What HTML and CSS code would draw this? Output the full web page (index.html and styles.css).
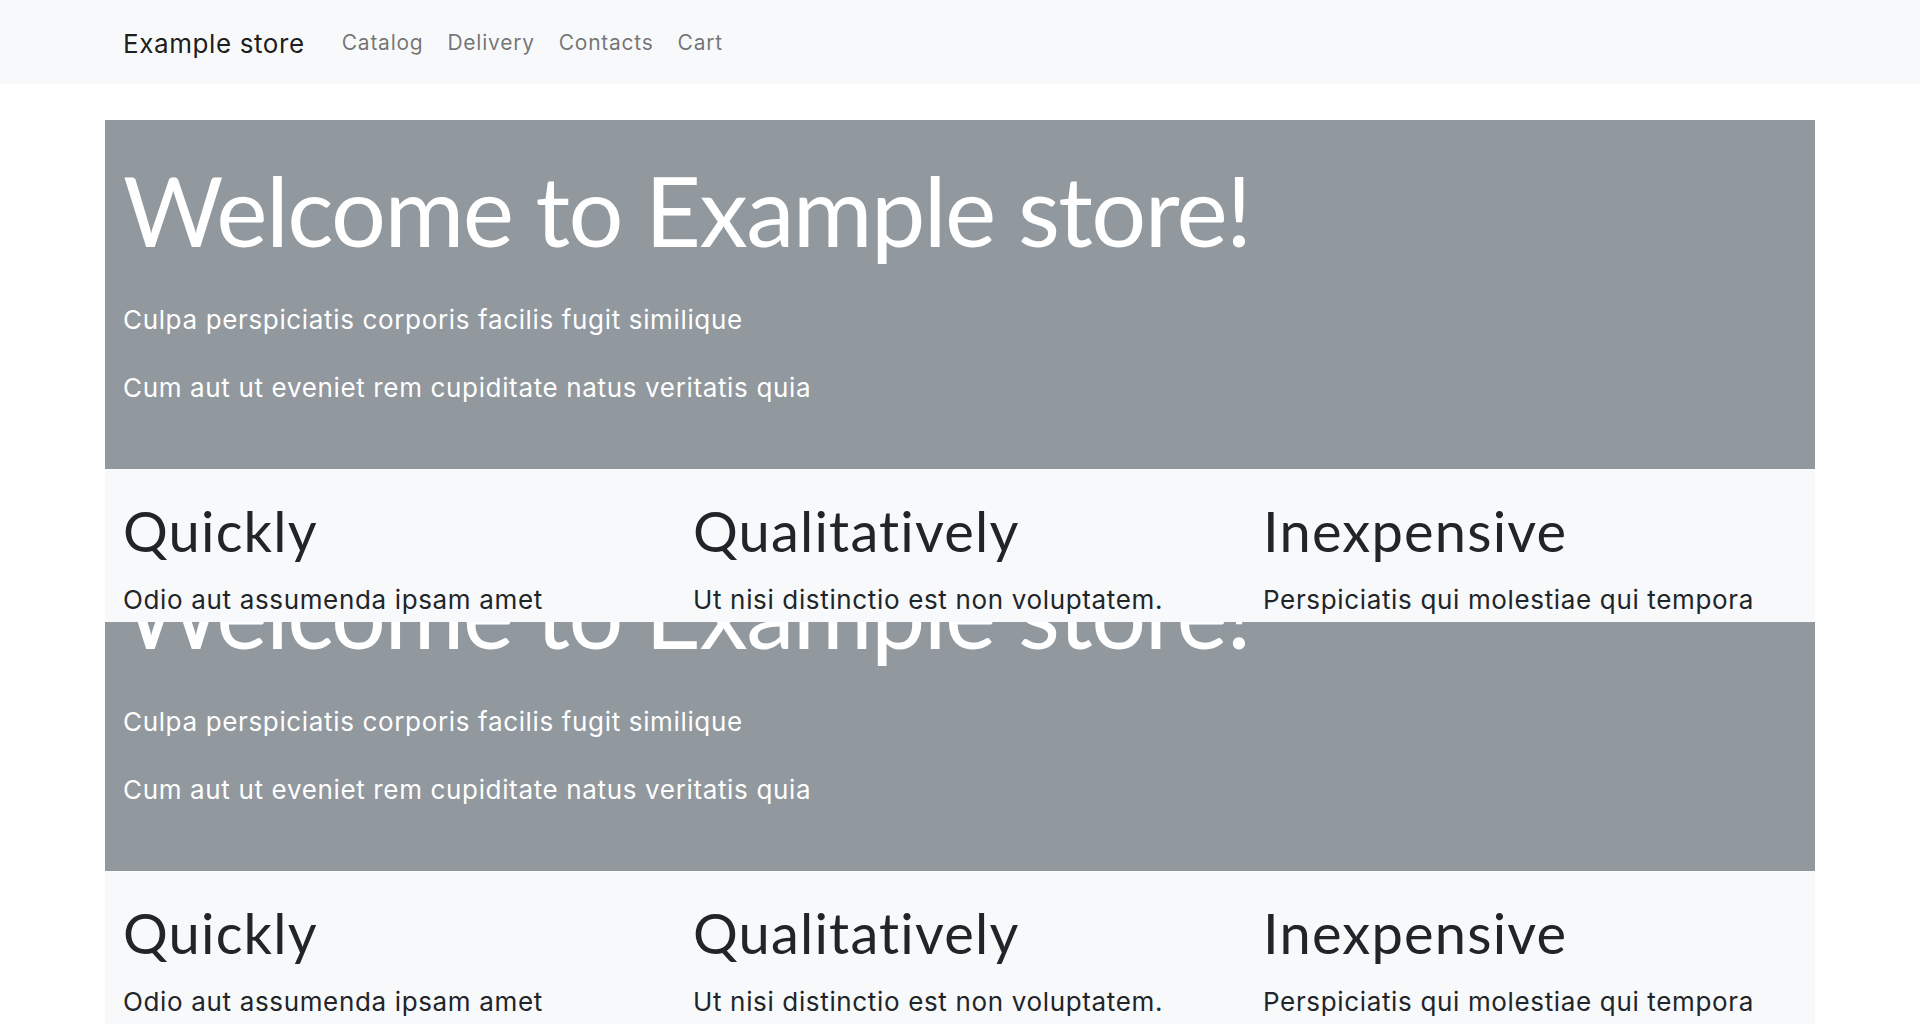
FILE: index.html
```html
<!DOCTYPE html>
<html lang="en">
<head>
<meta charset="utf-8">
<title>Example store</title>
<link rel="stylesheet" href="styles.css">
</head>
<body>
<nav class="navbar">
  <div class="nav-inner">
    <a class="brand" href="#">Example store</a>
    <ul class="nav-links">
      <li><a href="#">Catalog</a></li>
      <li><a href="#">Delivery</a></li>
      <li><a href="#">Contacts</a></li>
      <li><a href="#">Cart</a></li>
    </ul>
  </div>
</nav>
<main class="container">
  <section class="hero">
    <h1 class="hero-title">Welcome to Example store!</h1>
    <p class="lead">Culpa perspiciatis corporis facilis fugit similique</p>
    <p class="lead">Cum aut ut eveniet rem cupiditate natus veritatis quia</p>
  </section>
  <section class="features">
    <div class="feature">
      <h2 class="feature-title">Quickly</h2>
      <p class="lead">Odio aut assumenda ipsam amet</p>
    </div>
    <div class="feature">
      <h2 class="feature-title">Qualitatively</h2>
      <p class="lead">Ut nisi distinctio est non voluptatem.</p>
    </div>
    <div class="feature">
      <h2 class="feature-title">Inexpensive</h2>
      <p class="lead">Perspiciatis qui molestiae qui tempora</p>
    </div>
  </section>
  <section class="hero">
    <h1 class="hero-title">Welcome to Example store!</h1>
    <p class="lead">Culpa perspiciatis corporis facilis fugit similique</p>
    <p class="lead">Cum aut ut eveniet rem cupiditate natus veritatis quia</p>
  </section>
  <section class="features features-last">
    <div class="feature">
      <h2 class="feature-title">Quickly</h2>
      <p class="lead">Odio aut assumenda ipsam amet</p>
    </div>
    <div class="feature">
      <h2 class="feature-title">Qualitatively</h2>
      <p class="lead">Ut nisi distinctio est non voluptatem.</p>
    </div>
    <div class="feature">
      <h2 class="feature-title">Inexpensive</h2>
      <p class="lead">Perspiciatis qui molestiae qui tempora</p>
    </div>
  </section>
</main>
</body>
</html>
```
FILE: styles.css
```css
* { box-sizing: border-box; }

html, body {
  margin: 0;
  padding: 0;
}

body {
  font-family: Inter, "Open Sans", "Liberation Sans", sans-serif;
  color: #212529;
  background: #ffffff;
}

a { text-decoration: none; }

.navbar {
  background: #f8f9fa;
  height: 84px;
}

.nav-inner {
  margin: 0 105px;
  padding: 2px 18px 0;
  height: 100%;
  display: flex;
  align-items: center;
}

.brand {
  font-size: 26px;
  letter-spacing: 0.6px;
  color: rgba(0, 0, 0, 0.9);
  margin-right: 25px;
  line-height: 1.5;
}

.nav-links {
  display: flex;
  list-style: none;
  margin: 0;
  padding: 0;
}

.nav-links a {
  display: block;
  padding: 0 12px;
  font-size: 21px;
  letter-spacing: 0.75px;
  line-height: 1.5;
  color: rgba(0, 0, 0, 0.55);
}

.container {
  margin: 0 105px;
}

.hero {
  margin-top: 36px;
  background: rgb(145, 152, 158);
  color: #ffffff;
  padding: 32px 18px 33px;
}

.hero-title {
  font-family: Lato, Inter, "Liberation Sans", sans-serif;
  font-size: 97px;
  letter-spacing: -1.6px;
  font-weight: 400;
  line-height: 1.2;
  margin: 0 0 33px;
}

.lead {
  font-size: 26px;
  letter-spacing: 0.65px;
  line-height: 37.5px;
  margin: 0 0 30px;
}

.features {
  position: relative;
  background: #f8f9fa;
  display: grid;
  grid-template-columns: repeat(3, 1fr);
  padding: 28px 0 4px;
  margin-bottom: -136px;
}

.features-last {
  margin-bottom: 0;
}

.feature {
  padding: 0 18px;
}

.feature-title {
  font-family: Lato, Inter, "Liberation Sans", sans-serif;
  font-size: 56px;
  letter-spacing: 1.2px;
  font-weight: 400;
  line-height: 1.2;
  margin: 0 0 16px;
}

.feature .lead {
  margin: 0;
}
```
